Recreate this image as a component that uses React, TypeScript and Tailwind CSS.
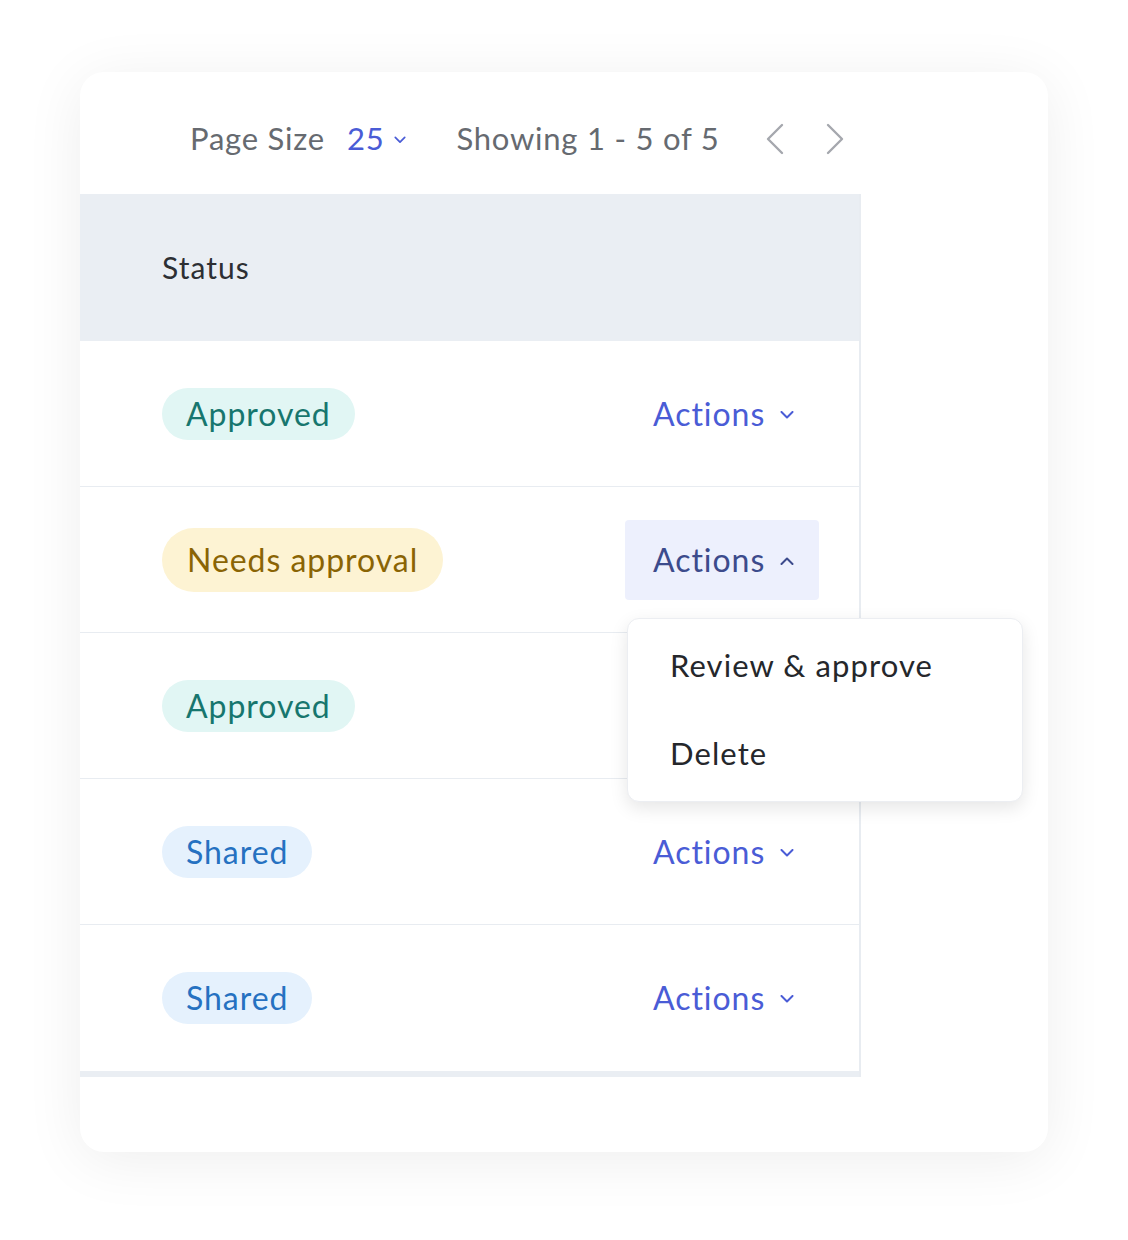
type Status = 'approved' | 'needs' | 'shared'

const rows: { status: Status; open?: boolean }[] = [
  { status: 'approved' },
  { status: 'needs', open: true },
  { status: 'approved' },
  { status: 'shared' },
  { status: 'shared' },
]

const badge: Record<Status, { label: string; cls: string }> = {
  approved: { label: 'Approved', cls: 'h-[52px] px-[24px] bg-[#e1f6f4] text-[#17766e]' },
  needs: { label: 'Needs approval', cls: 'h-[64px] px-[25px] bg-[#fdf3d3] text-[#8a6404]' },
  shared: { label: 'Shared', cls: 'h-[52px] px-[24px] bg-[#e5f1fd] text-[#2671c1]' },
}

function Caret({ up, className }: { up?: boolean; className?: string }): React.JSX.Element {
  return (
    <svg width="14" height="8" viewBox="0 0 14 8" fill="none" className={className}>
      <polyline
        points={up ? '1.5,7 7,1.5 12.5,7' : '1.5,1 7,6.5 12.5,1'}
        stroke="currentColor"
        strokeWidth="2"
        strokeLinecap="round"
        strokeLinejoin="round"
      />
    </svg>
  )
}

function Arrow({ left, className }: { left?: boolean; className?: string }): React.JSX.Element {
  return (
    <svg width="20" height="32" viewBox="0 0 20 32" fill="none" className={className}>
      <polyline
        points={left ? '17,2 3,16 17,30' : '3,2 17,16 3,30'}
        stroke="currentColor"
        strokeWidth="2.4"
        strokeLinecap="round"
        strokeLinejoin="round"
      />
    </svg>
  )
}

export default function App(): React.JSX.Element {
  return (
    <div className="min-h-[1240px] bg-white pt-[72px] pl-[80px] font-['Lato',sans-serif]">
      <div className="w-[968px] h-[1080px] rounded-[24px] bg-white shadow-[0_8px_60px_rgba(0,0,0,0.07)]">
        <div className="flex items-center h-[122px] pt-[11px] pl-[110px] text-[31px] tracking-[0.025em] text-[#666a70]">
          <span>Page Size</span>
          <span className="ml-[22px] text-[#4a5cd6]">25</span>
          <Caret className="ml-[10px] mt-[2px] w-[12px] text-[#4a5cd6]" />
          <span className="ml-[50px]">Showing 1 - 5 of 5</span>
          <Arrow left className="ml-[46px] text-[#a5a8ae]" />
          <Arrow className="ml-[40px] text-[#a5a8ae]" />
        </div>
        <div className="w-[781px] border-r-2 border-[#e8ecf1]">
          <div className="h-[147px] bg-[#eaeef3] flex items-center pl-[82px] text-[30px] tracking-[0.035em] text-[#2d2f33]">
            Status
          </div>
          {rows.map((r, i) => (
            <div
              key={i}
              className={`h-[146px] flex items-center justify-between pl-[82px] pr-[40px] text-[32px] tracking-[0.03em] ${i < rows.length - 1 ? 'border-b border-[#e8ecf1]' : ''}`}
            >
              <span className={`inline-flex items-center rounded-full ${badge[r.status].cls}`}>
                {badge[r.status].label}
              </span>
              <div className="relative">
                <button
                  type="button"
                  className={`flex items-center h-[80px] w-[194px] pl-[28px] rounded-[4px] tracking-[0.03em] ${r.open ? 'bg-[#edf0fd] text-[#3c4b8c]' : 'text-[#4a5cd6]'}`}
                >
                  Actions
                  <Caret up={r.open} className="ml-[15px] mt-[2px]" />
                </button>
                {r.open ? (
                  <div className="absolute left-[2px] top-[98px] w-[396px] h-[184px] rounded-[12px] bg-white border border-[#eceef2] shadow-[0_6px_18px_rgba(0,0,0,0.10)] flex flex-col justify-center pl-[42px] text-[31px] tracking-[0.035em] text-[#25272b] z-10">
                    <div className="h-[88px] flex items-center">Review &amp; approve</div>
                    <div className="h-[88px] flex items-center">Delete</div>
                  </div>
                ) : null}
              </div>
            </div>
          ))}
          <div className="h-[6px] bg-[#eaeef3]" />
        </div>
      </div>
    </div>
  )
}
